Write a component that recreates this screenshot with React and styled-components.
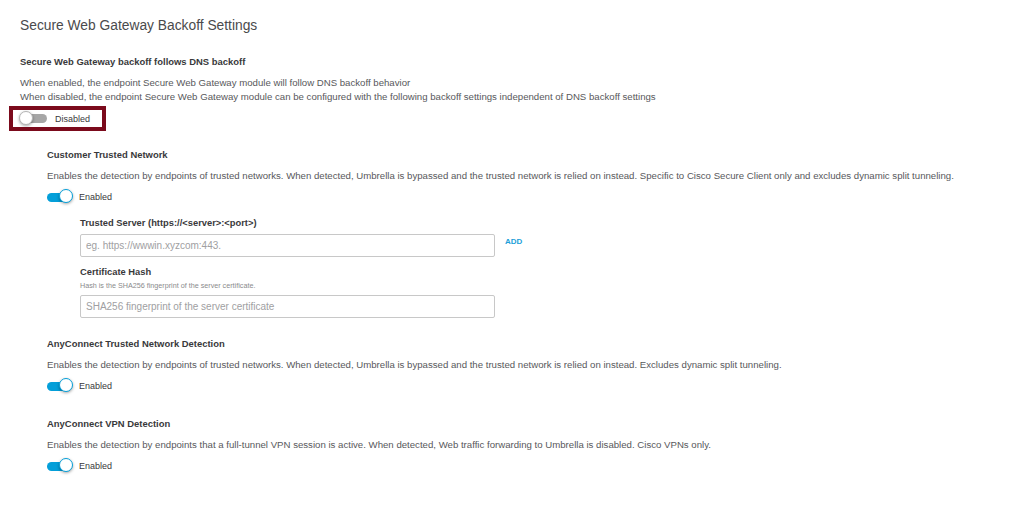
import React from "react";
import styled, { createGlobalStyle } from "styled-components";

const GlobalStyle = createGlobalStyle`
  body {
    margin: 0;
    background: #ffffff;
    font-family: "Liberation Sans", Arial, sans-serif;
    color: #39393b;
  }
`;

const Toggle = ({ on, label }) => (
  <ToggleRow>
    <Track $on={on}>
      <Knob $on={on} />
    </Track>
    <ToggleLabel>{label}</ToggleLabel>
  </ToggleRow>
);

const Section = ({ title, text, mt, children }) => (
  <SectionWrapper $mt={mt}>
    <Heading>{title}</Heading>
    <Desc $mt={7}>{text}</Desc>
    <Toggle on label="Enabled" />
    {children}
  </SectionWrapper>
);

const App = () => {
  return (
    <Page>
      <GlobalStyle />
      <Title>Secure Web Gateway Backoff Settings</Title>
      <Heading $mt={20}>Secure Web Gateway backoff follows DNS backoff</Heading>
      <Desc $mt={7}>
        When enabled, the endpoint Secure Web Gateway module will follow DNS backoff behavior
        <br />
        When disabled, the endpoint Secure Web Gateway module can be configured with the following
        backoff settings independent of DNS backoff settings
      </Desc>
      <Highlight>
        <Toggle on={false} label="Disabled" />
      </Highlight>

      <Section
        mt={17}
        title="Customer Trusted Network"
        text="Enables the detection by endpoints of trusted networks. When detected, Umbrella is bypassed and the trusted network is relied on instead. Specific to Cisco Secure Client only and excludes dynamic split tunneling."
      >
        <Fields>
          <FieldLabel $mt={11}>Trusted Server (https://&lt;server&gt;:&lt;port&gt;)</FieldLabel>
          <InputRow>
            <Input placeholder="eg. https://wwwin.xyzcom:443." />
            <AddLink>ADD</AddLink>
          </InputRow>
          <FieldLabel $mt={8}>Certificate Hash</FieldLabel>
          <Hint>Hash is the SHA256 fingerprint of the server certificate.</Hint>
          <InputRow>
            <Input placeholder="SHA256 fingerprint of the server certificate" />
          </InputRow>
        </Fields>
      </Section>

      <Section
        mt={19}
        title="AnyConnect Trusted Network Detection"
        text="Enables the detection by endpoints of trusted networks. When detected, Umbrella is bypassed and the trusted network is relied on instead. Excludes dynamic split tunneling."
      />

      <Section
        mt={23}
        title="AnyConnect VPN Detection"
        text="Enables the detection by endpoints that a full-tunnel VPN session is active. When detected, Web traffic forwarding to Umbrella is disabled. Cisco VPNs only."
      />
    </Page>
  );
};

const Page = styled.div`
  padding: 17px 20px 20px;
`;

const Title = styled.h1`
  margin: 0;
  font-size: 13.8px;
  line-height: 18px;
  font-weight: 400;
  color: #4a4a4c;
`;

const Heading = styled.h3`
  margin: ${(p) => p.$mt || 0}px 0 0;
  font-size: 9.45px;
  line-height: 14px;
  font-weight: 700;
  color: #39393b;
`;

const Desc = styled.p`
  margin: ${(p) => p.$mt || 0}px 0 0;
  font-size: 9.65px;
  line-height: 14px;
  color: #58585b;
`;

const Highlight = styled.div`
  display: inline-flex;
  align-items: center;
  margin: 2px 0 0 -11px;
  padding: 0 12px 0 4px;
  height: 17px;
  border: 4px solid #7b0a1c;
`;

const ToggleRow = styled.div`
  display: flex;
  align-items: center;
  height: 16px;
  margin-top: 6px;
  ${Highlight} & {
    margin-top: 0;
  }
`;

const Track = styled.div`
  position: relative;
  width: 24px;
  height: 9px;
  border-radius: 5px;
  margin-left: ${(p) => (p.$on ? 0 : 6)}px;
  background: ${(p) => (p.$on ? "#049fd9" : "#a6a6a6")};
`;

const Knob = styled.div`
  position: absolute;
  top: 50%;
  left: ${(p) => (p.$on ? "12px" : "-4px")};
  width: 12px;
  height: 12px;
  margin-top: -8px;
  border-radius: 50%;
  background: #ffffff;
  border: 1.5px solid ${(p) => (p.$on ? "#049fd9" : "#b5b5b5")};
  box-shadow: 0 1px 3px rgba(0, 0, 0, 0.35);
`;

const ToggleLabel = styled.span`
  margin-left: 8px;
  font-size: 9px;
  color: #39393b;
`;

const SectionWrapper = styled.section`
  margin: ${(p) => p.$mt}px 0 0 27px;
`;

const Fields = styled.div`
  margin-left: 33px;
`;

const FieldLabel = styled.div`
  margin-top: ${(p) => p.$mt}px;
  font-size: 9.35px;
  line-height: 14px;
  font-weight: 700;
  color: #39393b;
`;

const Hint = styled.div`
  margin-top: 2px;
  font-size: 7.2px;
  line-height: 10px;
  color: #8a8a8c;
`;

const InputRow = styled.div`
  display: flex;
  align-items: center;
  gap: 10px;
  margin-top: 4px;
`;

const Input = styled.input`
  box-sizing: border-box;
  width: 415px;
  height: 23px;
  padding: 0 5px;
  border: 1px solid #c8c8c8;
  border-radius: 2px;
  font-family: "Liberation Sans", Arial, sans-serif;
  font-size: 10px;
  color: #39393b;
  outline: none;
  &::placeholder {
    color: #a0a0a2;
  }
`;

const AddLink = styled.span`
  margin-top: -8px;
  font-size: 8px;
  font-weight: 700;
  color: #1e9fd9;
`;

export default App;
